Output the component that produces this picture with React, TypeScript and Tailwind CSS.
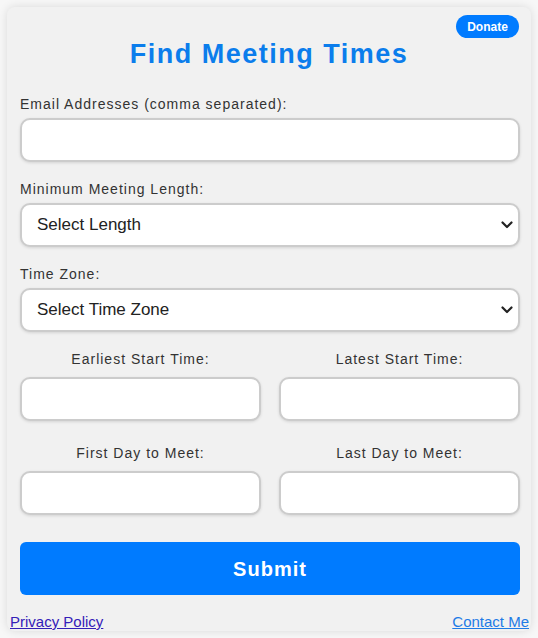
import React from "react";

const Chevron = () => (
  <svg
    className="pointer-events-none absolute right-[7px] top-1/2 -translate-y-1/2"
    width="12"
    height="8"
    viewBox="0 0 12 8"
    fill="none"
  >
    <path d="M1.5 1.5 6 6l4.5-4.5" stroke="#222" strokeWidth="2.2" strokeLinecap="round" strokeLinejoin="round" />
  </svg>
);

const inputClass =
  "block h-[44px] w-full rounded-[10px] border-2 border-[#cccccc] bg-white shadow-[0_1px_3px_rgba(0,0,0,0.12)] outline-none";

interface FieldProps {
  label: string;
  children: React.ReactNode;
}

const Field = ({ label, children }: FieldProps) => (
  <div className="mb-[17px]">
    <label className="mb-[4px] block text-[14px] leading-[20px] tracking-[1px] text-[#333]">{label}</label>
    {children}
  </div>
);

const SelectBox = ({ placeholder }: { placeholder: string }) => (
  <div className="relative">
    <select
      defaultValue=""
      className={`${inputClass} appearance-none pl-[15px] text-[17px] text-[#222]`}
    >
      <option value="">{placeholder}</option>
    </select>
    <Chevron />
  </div>
);

const HalfField = ({ label }: { label: string }) => (
  <div>
    <label className="mb-[8px] block text-center text-[14px] leading-[20px] tracking-[1px] text-[#333]">{label}</label>
    <input type="text" className={`${inputClass} h-[43px]`} />
  </div>
);

export default function App() {
  return (
    <div className="min-h-screen bg-[#f7f7f7] p-[7px] font-['Liberation_Sans',Arial,sans-serif]">
      <div className="relative rounded-[8px] bg-[#f1f1f1] pt-[32px] shadow-[0_0_10px_rgba(0,0,0,0.12)]">
        <button className="absolute right-[12px] top-[8px] h-[23px] w-[63px] rounded-full bg-[#007bff] text-[12px] font-bold text-white">
          Donate
        </button>

        <h1 className="text-center text-[27px] font-bold leading-[30px] tracking-[1.5px] text-[#0b7dec]">
          Find Meeting Times
        </h1>

        <form className="mt-[25px] pl-[13px] pr-[11px]">
          <Field label="Email Addresses (comma separated):">
            <input type="text" className={inputClass} />
          </Field>
          <Field label="Minimum Meeting Length:">
            <SelectBox placeholder="Select Length" />
          </Field>
          <Field label="Time Zone:">
            <SelectBox placeholder="Select Time Zone" />
          </Field>

          <div className="grid grid-cols-2 gap-x-[18px] gap-y-[22px]">
            <HalfField label="Earliest Start Time:" />
            <HalfField label="Latest Start Time:" />
            <HalfField label="First Day to Meet:" />
            <HalfField label="Last Day to Meet:" />
          </div>

          <button
            type="button"
            className="mt-[27px] block h-[53px] w-full rounded-[6px] bg-[#007bff] text-[20px] font-bold tracking-[1px] text-white"
          >
            Submit
          </button>
        </form>

        <div className="mt-[18px] flex justify-between pl-[3px] pr-[2px] text-[15px] leading-[18px]">
          <a href="#" className="text-[#3420b8] underline">
            Privacy Policy
          </a>
          <a href="#" className="text-[#1e7be6] underline">
            Contact Me
          </a>
        </div>
      </div>
    </div>
  );
}
